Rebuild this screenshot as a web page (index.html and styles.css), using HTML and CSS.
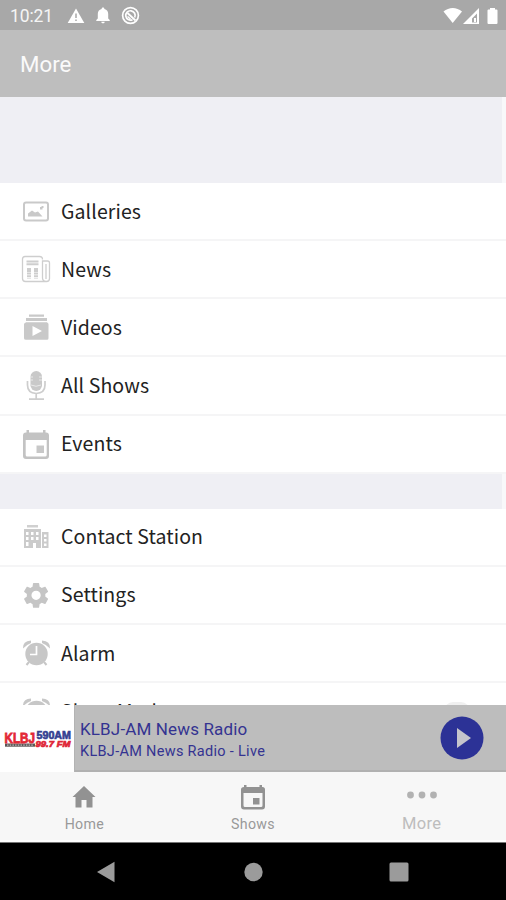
FILE: index.html
```html
<!DOCTYPE html>
<html lang="en">
<head>
<meta charset="utf-8">
<title>More</title>
<link rel="stylesheet" href="styles.css">
</head>
<body>
<div class="screen">
  <div class="status">
    <span class="time">10:21</span>
    <svg class="warn" width="18" height="16" viewBox="0 0 18 16"><path fill="#fff" d="M9 0.5 17.3 15H.7z"/><path stroke="#a8a8a8" stroke-width="1.500" d="M9 5.500v4.500M9 11.400v1.500"/></svg>
    <svg class="bell" width="14" height="17" viewBox="0 0 14 17"><path fill="#fff" d="M7 .5c.9 0 1.400.6 1.400 1.500C11 2.700 12.200 4.600 12.200 7v4.500L13.700 13v1H.3v-1l1.500-1.500V7c0-2.400 1.200-4.300 3.800-5C5.600 1.100 6.100.5 7 .5M5.300 14.700h3.400c0 2.200-3.400 2.200-3.400 0"/></svg>
    <svg class="noentry" width="19" height="19" viewBox="0 0 19 19" fill="none" stroke="#fff"><circle cx="9.500" cy="9.500" r="7.900" stroke-width="1.700"/><path d="M13.700 11.500a4.700 4.700 0 1 0-2.200 2.200" stroke-width="1.700"/><path d="m6.500 7 8 7.500" stroke-width="1.800"/><path d="M6.500 10.500 9.500 13" stroke-width="1.500"/></svg>
    <svg class="signals" width="56" height="18" viewBox="0 0 56 18"><path fill="#fff" d="M.5 4.500C6-.3 13.500-.3 19 4.500L9.700 16z"/><path fill="#fff" fill-rule="evenodd" d="M36 1v16H20zM34 6.500 29 11.500v4h5z"/><path fill="#fff" d="M31 11h2v4h-2zM47 2.500V1h5v1.500h1.500q1 0 1 1V16q0 1-1 1h-8q-1 0-1-1V3.500q0-1 1-1z"/></svg>
  </div>
  <header class="bar">More</header>
  <main class="content">
    <div class="spacer top"></div>
    <div class="row"><svg class="icon" viewBox="0 0 30 32"><rect x="3" y="7.500" width="24" height="18" rx="2" fill="none" stroke="#c9c9c9" stroke-width="2"/><path fill="#c9c9c9" d="M7 21.500v-3l4-3 3 2 3-1 4.500 5zM19 12h1.500v-1h2v2h-1v1.500H19z"/></svg><span>Galleries</span></div>
    <div class="row"><svg class="icon" viewBox="0 0 30 32" fill="none" stroke="#cecece"><path stroke-width="1.300" d="M21.500 6.500q0-3-3-3H4q-2.500 0-2.500 2.500v19.500q0 3 3 3h21q3 0 3-3V10q0-2-2-2h-5v17q0 3 3.500 3.500M25 11v15"/><path stroke-width="2" d="M5.500 8.500h12M5.500 11.200h12"/><path stroke-width="4" d="M8 15v4M15 15v4"/><path stroke-width="4" stroke-dasharray="2 .7" d="M8 19.500v6M15 19.500v6"/></svg><span>News</span></div>
    <div class="row"><svg class="icon" viewBox="0 0 30 32"><path fill="#c9c9c9" fill-rule="evenodd" d="M8 3.500h15v2.200H8zM5 7h21v3H5zM5 11.300h21l1.500 1.500v14.500q0 1.500-1.500 1.500H5q-2 0-2-1.500V12.800zM11.500 15v10l9.500-5z"/></svg><span>Videos</span></div>
    <div class="row"><svg class="icon" viewBox="0 0 30 32"><rect x="9.500" y="2" width="11.500" height="20" rx="5.700" fill="#c9c9c9"/><path fill="none" stroke="#e9e9e9" stroke-width="1" d="M9 8h3M18 8h3M9 11h3M18 11h3M10 16q5 2.500 10 0"/><path fill="none" stroke="#cdcdcd" stroke-width="1.700" d="M6.500 12v4q0 8 8.700 8.500 8.800-.5 8.800-8.500v-4M15.200 24v5.500M8 30.200h15"/></svg><span>All Shows</span></div>
    <div class="row"><svg class="icon" viewBox="0 0 30 32"><path fill="#c3c3c3" fill-rule="evenodd" d="M5.500 2H8v2.500h14V2h2.500v2.500H25q3 0 3 3V28q0 3-3 3H5q-3 0-3-3V7.500q0-3 3-3h.5zM4.700 12v15q0 1.500 1.500 1.500h18q1.500 0 1.500-1.500V12z"/><path fill="#c8c8c8" d="M15.500 17.500h7.500V25h-7.500z"/></svg><span>Events</span></div>
    <div class="spacer mid"></div>
    <div class="row"><svg class="icon" viewBox="0 0 30 32"><path fill="#d0d0d0" d="M6 4h11v2.500H6z"/><path fill="#cbcbcb" fill-rule="evenodd" d="M3 8h17v19h-5v-5h-3v5H3zM5 11h2.500v3H5zM10 11h2.500v3H10zM15 11h2.500v3H15zM5 16h2.500v3H5zM10 16h2.500v3H10zM15 16h2.500v3H15zM5 21h2.500v4H5zM21 11h6.500v16H21zM23 13.500h2.500V16H23zM23 18h2.500v2.500H23zM23 22.500h2.500V25H23z"/></svg><span>Contact Station</span></div>
    <div class="row"><svg class="icon gear" viewBox="0 0 24 25.600"><path transform="translate(-.3 .7) scale(1.030)" fill="#c5c5c5" d="M19.140 12.940c.04-.3.060-.61.060-.94s-.02-.64-.07-.94l2.030-1.580c.18-.14.230-.41.120-.61l-1.920-3.320c-.12-.22-.37-.29-.59-.22l-2.390.96c-.5-.38-1.030-.7-1.620-.94L14.400 2.810c-.04-.24-.24-.41-.48-.41h-3.840c-.24 0-.43.170-.47.410L9.250 5.350c-.59.240-1.130.570-1.620.94l-2.390-.96c-.22-.08-.47 0-.59.220L2.740 8.870c-.12.210-.08.470.12.610l2.030 1.580c-.05.300-.09.630-.09.940s.02.640.07.940l-2.030 1.580c-.18.140-.23.410-.12.610l1.920 3.320c.12.220.37.290.59.220l2.390-.96c.5.380 1.030.7 1.620.94l.36 2.540c.05.240.24.410.48.410h3.840c.24 0 .44-.17.470-.41l.36-2.540c.59-.24 1.130-.56 1.620-.94l2.390.96c.22.080.47 0 .59-.22l1.920-3.320c.12-.22.070-.47-.12-.61zM12 15.600a3.600 3.600 0 1 1 0-7.200 3.600 3.600 0 0 1 0 7.200"/></svg><span>Settings</span></div>
    <div class="row"><svg class="icon" viewBox="0 0 30 32"><path fill="#c7c7c7" d="M2 11.500Q1.500 4 10 3.500V6Q5 8 2 11.500M29 11.500Q29.500 4 21 3.500V6q5 2 8 5.500"/><circle cx="15.500" cy="17" r="11.200" fill="#c7c7c7"/><path fill="none" stroke="#c7c7c7" stroke-width="2" d="m8 25-2.500 3M23 25l2.500 3"/><path fill="none" stroke="#fff" stroke-width="1.700" d="M15.500 9v8.500H9"/></svg><span>Alarm</span></div>
    <div class="row"><svg class="icon" viewBox="0 0 30 32"><path fill="#c7c7c7" d="M2 11.500Q1.500 4 10 3.500V6Q5 8 2 11.500M29 11.500Q29.500 4 21 3.500V6q5 2 8 5.500"/><circle cx="15.500" cy="17" r="11.200" fill="#c7c7c7"/></svg><span>Sleep Mode</span><i class="switch"></i></div>
  </main>
  <section class="player">
    <div class="art">
      <svg width="74" height="64" viewBox="0 0 74 64" font-family="Liberation Sans" font-weight="bold"><path fill="#5c5555" d="M5 36.500h30v3.200H5z"/><path stroke="#bbb" stroke-width="1.300" stroke-dasharray="1.500 1.200" d="M7 38.200h26"/><text x="4.500" y="35.700" font-size="15.500" fill="#e32836" stroke="#e32836" stroke-width=".9" textLength="30.500" lengthAdjust="spacingAndGlyphs">KLBJ</text><text x="36.500" y="32.300" font-size="10" fill="#343f91" stroke="#343f91" stroke-width=".6" textLength="34.500" lengthAdjust="spacingAndGlyphs">590AM</text><text x="35.500" y="39.700" font-size="9" font-style="italic" fill="#df2637" stroke="#df2637" stroke-width=".7" textLength="35" lengthAdjust="spacingAndGlyphs">99.7 FM</text></svg>
    </div>
    <div class="track"><div class="title">KLBJ-AM News Radio</div><div class="subtitle">KLBJ-AM News Radio - Live</div></div>
    <svg class="play" width="44" height="44" viewBox="0 0 44 44"><circle cx="22" cy="22" r="21.500" fill="#2c3296"/><path fill="#c5c5cc" d="M17 12v20l14-10z"/></svg>
  </section>
  <nav class="tabs">
    <div class="tab"><svg width="28" height="28" viewBox="0 0 28 28"><path fill="#929292" d="M14 3 25.500 14H22.500v10.500H16.500V17h-5v7.500h-6V14H2.500z"/></svg><span>Home</span></div>
    <div class="tab"><svg width="28" height="28" viewBox="0 0 28 28"><path fill="#929292" fill-rule="evenodd" d="M5 2h2.500v2h13V2H23v2h.5q2.500 0 2.500 2.500v17q0 3-3 3H5q-3 0-3-3v-17Q2 4 5 4zM4.500 10v12.500q0 1.500 1.500 1.500h16q1.500 0 1.500-1.500V10z"/><path fill="#929292" d="M14 15h6.500v6.500H14z"/></svg><span>Shows</span></div>
    <div class="tab active"><svg width="32" height="28" viewBox="0 0 32 28" fill="#b2b2b2"><circle cx="4.500" cy="12" r="3.400"/><circle cx="16" cy="12" r="3.400"/><circle cx="27.500" cy="12" r="3.400"/></svg><span>More</span></div>
  </nav>
  <div class="system">
    <svg width="20" height="22" viewBox="0 0 20 22"><path fill="#9b9b9b" d="M17.500.7v20.600L0 11z"/></svg>
    <svg width="20" height="20" viewBox="0 0 20 20"><circle cx="10.500" cy="10" r="9.200" fill="#9b9b9b"/></svg>
    <svg width="20" height="20" viewBox="0 0 20 20"><rect x=".5" y=".5" width="19" height="19" rx="1.500" fill="#9b9b9b"/></svg>
  </div>
</div>
</body>
</html>
```
FILE: styles.css
```css
* { box-sizing: border-box; }
body { margin: 0; font-family: Roboto, sans-serif; }
svg { display: block; flex: none; }
.screen { width: 506px; height: 900px; display: flex; flex-direction: column; overflow: hidden; background: #fff; }
.status { height: 30px; flex: none; background: #a8a8a8; display: flex; align-items: center; padding: 1px 7px 0 10px; color: #f5f5f5; }
.time { font-size: 17.5px; width: 57px; letter-spacing: -.1px; }
.bell { margin-left: 11px; }
.noentry { margin-left: 11px; }
.signals { margin-left: auto; }
.bar { height: 67px; flex: none; background: #bebebe; color: #fafafa; font-size: 22.3px; line-height: 69px; padding-left: 20px; }
.content { height: 608px; flex: none; overflow: hidden; font-family: "Noto Sans CJK SC", sans-serif; font-size: 19.5px; letter-spacing: .1px; color: #222; }
.spacer { background: linear-gradient(to right, #efeff4 502px, #f8f8fa 502px); }
.top { height: 86px; }
.mid { height: 35px; }
.row { height: 58.15px; border-bottom: 2px solid #f5f5f6; display: flex; align-items: center; padding-left: 21px; }
.row span { padding-bottom: 2px; }
.icon { width: 30px; height: 32px; margin-right: 10px; }
.switch { width: 26px; height: 18px; border-radius: 9px; background: #f0f0f0; margin-left: auto; margin-right: 36px; }
.player { height: 67px; flex: none; display: flex; align-items: center; background: #bdbdbd; border-bottom: 2px solid #b1b1b1; }
.art { width: 75px; height: 67px; margin-bottom: -2px; background: #fff; border-right: 1px solid #b3b3b3; padding-top: 2px; }
.track { flex: 1; padding: 4px 0 0 5px; color: #343391; }
.title { font-size: 17px; line-height: 23px; letter-spacing: .15px; }
.subtitle { font-size: 14.5px; line-height: 21px; letter-spacing: .3px; }
.play { margin-right: 22px; }
.tabs { height: 70px; flex: none; background: #f7f7f7; display: grid; grid-template-columns: repeat(3, 1fr); border-bottom: 2px solid #fff; }
.tab { display: flex; flex-direction: column; align-items: center; padding-top: 11px; color: #999; font-size: 14.2px; letter-spacing: .3px; }
.tab span { line-height: 18px; margin-top: 4px; }
.active { color: #bdbdbd; font-size: 16.5px; }
.system { flex: 1; background: #000; border-top: 1px solid #777; display: flex; align-items: center; justify-content: center; gap: 126px; }
```
